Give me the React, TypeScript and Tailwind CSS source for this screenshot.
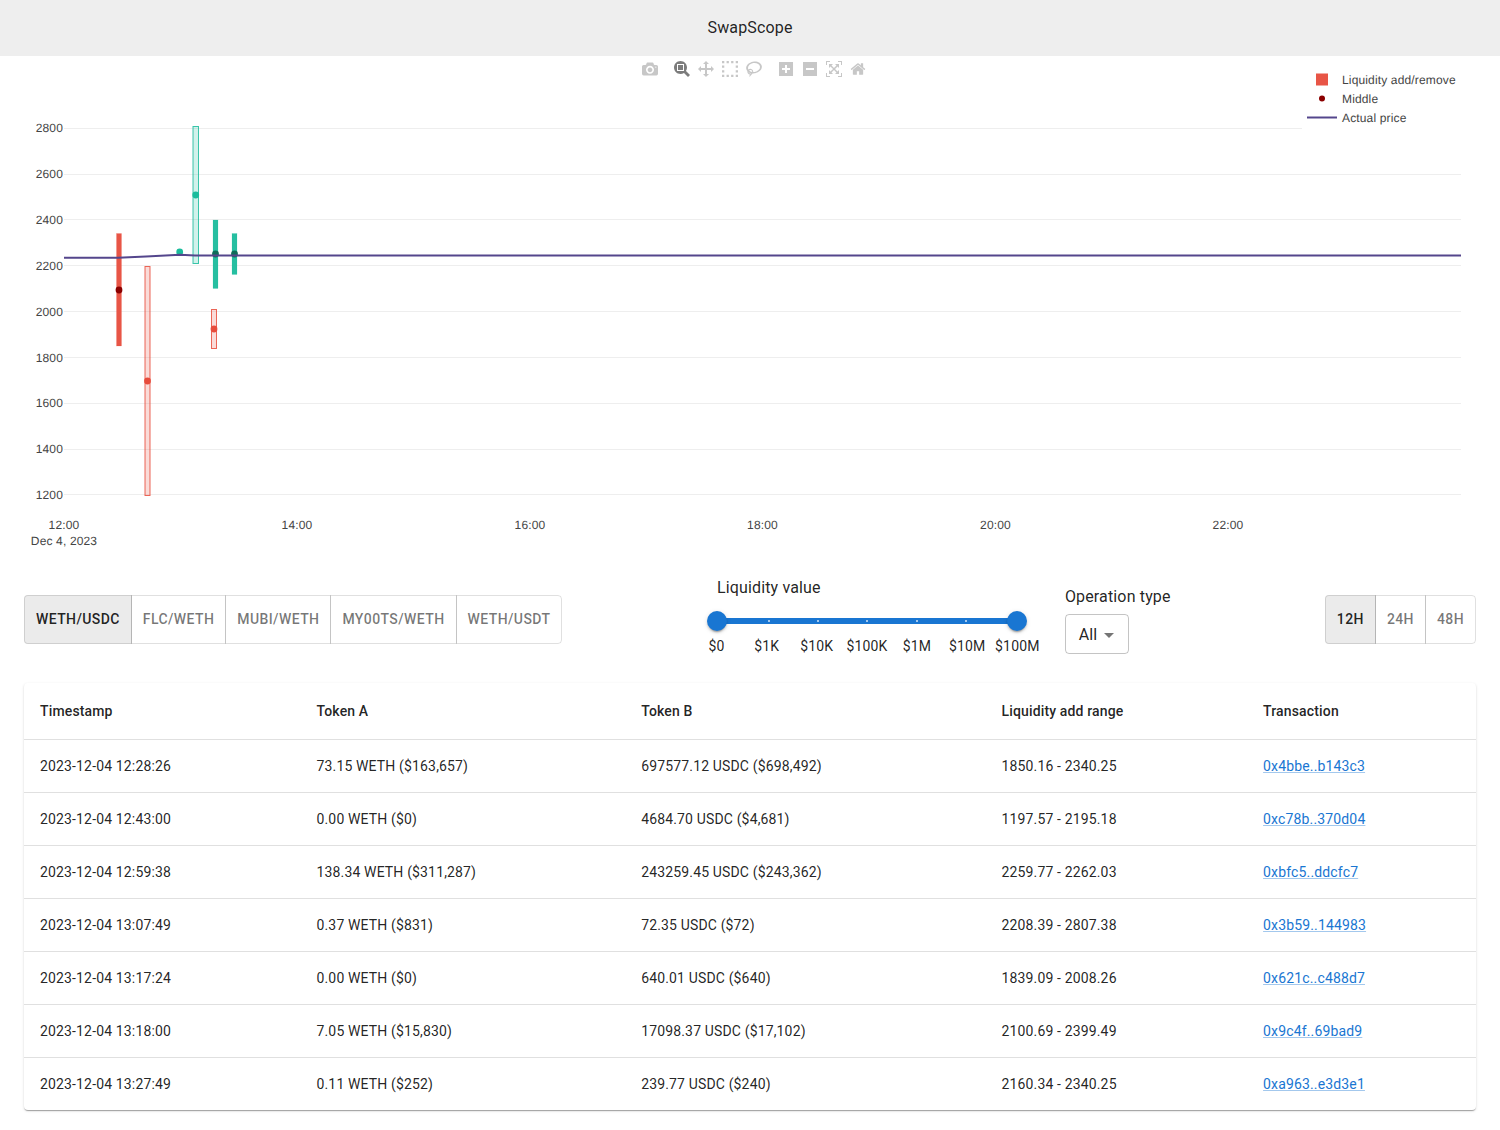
import { useState } from "react";

const PAIRS = ["WETH/USDC", "FLC/WETH", "MUBI/WETH", "MY00TS/WETH", "WETH/USDT"];
const RANGES = ["12H", "24H", "48H"];
const MARKS = ["$0", "$1K", "$10K", "$100K", "$1M", "$10M", "$100M"];

const ROWS = [
  ["2023-12-04 12:28:26", "73.15 WETH ($163,657)", "697577.12 USDC ($698,492)", "1850.16 - 2340.25", "0x4bbe..b143c3"],
  ["2023-12-04 12:43:00", "0.00 WETH ($0)", "4684.70 USDC ($4,681)", "1197.57 - 2195.18", "0xc78b..370d04"],
  ["2023-12-04 12:59:38", "138.34 WETH ($311,287)", "243259.45 USDC ($243,362)", "2259.77 - 2262.03", "0xbfc5..ddcfc7"],
  ["2023-12-04 13:07:49", "0.37 WETH ($831)", "72.35 USDC ($72)", "2208.39 - 2807.38", "0x3b59..144983"],
  ["2023-12-04 13:17:24", "0.00 WETH ($0)", "640.01 USDC ($640)", "1839.09 - 2008.26", "0x621c..c488d7"],
  ["2023-12-04 13:18:00", "7.05 WETH ($15,830)", "17098.37 USDC ($17,102)", "2100.69 - 2399.49", "0x9c4f..69bad9"],
  ["2023-12-04 13:27:49", "0.11 WETH ($252)", "239.77 USDC ($240)", "2160.34 - 2340.25", "0xa963..e3d3e1"],
];

// plotly modebar glyphs
const ICONS: { w: number; d: string; active?: boolean; gap?: boolean }[] = [
  {
    w: 1000,
    d: "m500 450c-83 0-150-67-150-150 0-83 67-150 150-150 83 0 150 67 150 150 0 83-67 150-150 150z m400 150h-120c-16 0-34 13-39 29l-31 93c-6 15-23 28-40 28h-340c-16 0-34-13-39-28l-31-94c-6-15-23-28-40-28h-120c-55 0-100-45-100-100v-450c0-55 45-100 100-100h800c55 0 100 45 100 100v450c0 55-45 100-100 100z m-400-550c-138 0-250 112-250 250 0 138 112 250 250 250 138 0 250-112 250-250 0-138-112-250-250-250z m365 380c-19 0-35 16-35 35 0 19 16 35 35 35 19 0 35-16 35-35 0-19-16-35-35-35z",
  },
  {
    w: 1000,
    gap: true,
    active: true,
    d: "m1000-25l-250 251c40 63 63 138 63 218 0 224-182 406-407 406-224 0-406-182-406-406s183-406 407-406c80 0 155 22 218 62l250-250 125 125z m-812 250l0 438 437 0 0-438-437 0z m62 375l313 0 0-312-313 0 0 312z",
  },
  {
    w: 1000,
    d: "m1000 350l-187 188 0-125-250 0 0 250 125 0-188 187-187-187 125 0 0-250-250 0 0 125-188-188 186-187 0 125 252 0 0-250-125 0 187-188 188 188-125 0 0 250 250 0 0-126 187 188z",
  },
  {
    w: 1000,
    d: "m0 850l0-143 143 0 0 143-143 0z m286 0l0-143 143 0 0 143-143 0z m285 0l0-143 143 0 0 143-143 0z m286 0l0-143 143 0 0 143-143 0z m-857-286l0-143 143 0 0 143-143 0z m857 0l0-143 143 0 0 143-143 0z m-857-285l0-143 143 0 0 143-143 0z m857 0l0-143 143 0 0 143-143 0z m-857-286l0-143 143 0 0 143-143 0z m286 0l0-143 143 0 0 143-143 0z m285 0l0-143 143 0 0 143-143 0z m286 0l0-143 143 0 0 143-143 0z",
  },
  {
    w: 1031,
    d: "m1018 538c-36 207-290 336-568 286-277-48-473-256-436-463 10-57 36-108 76-151-13-66 11-137 68-183 34-28 75-41 114-42l-55-70 0 0c-2-1-3-2-4-3-10-14-8-34 5-45 14-11 34-8 45 4 1 1 2 3 2 5l0 0 113 140c16 11 31 24 45 40 4 3 6 7 8 11 48-3 100 0 151 9 278 48 473 255 436 462z m-624-379c-80 14-149 48-197 96 42 42 109 47 156 9 33-26 47-66 41-105z m-187-74c-19 16-33 37-39 60 50-32 109-55 174-68-42-25-95-24-135 8z m360 75c-34-7-69-9-102-8 8 62-16 128-68 170-73 59-175 54-244-5-9 20-16 40-20 61-28 159 121 317 333 354s407-60 434-217c28-159-121-318-333-355z",
  },
  {
    w: 875,
    gap: true,
    d: "m1 787l0-875 875 0 0 875-875 0z m687-500l-187 0 0-187-125 0 0 187-188 0 0 125 188 0 0 187 125 0 0-187 187 0 0-125z",
  },
  { w: 875, d: "m0 788l0-876 875 0 0 876-875 0z m688-500l-500 0 0 125 500 0 0-125z" },
  {
    w: 1000,
    d: "m250 850l-187 0-63 0 0-62 0-188 63 0 0 188 187 0 0 62z m688 0l-188 0 0-62 188 0 0-188 62 0 0 188 0 62-62 0z m-875-938l0 188-63 0 0-188 0-62 63 0 187 0 0 62-187 0z m875 188l0-188-188 0 0-62 188 0 62 0 0 62 0 188-62 0z m-125 188l-1 0-93-94-156 156 156 156 92-93 2 0 0 250-250 0 0-2 93-92-156-156-156 156 94 92 0 2-250 0 0-250 0 0 93 93 157-156-157-156-93 94 0 0 0-250 250 0 0 0-94 93 156 157 156-157-93-93 0 0 250 0 0 250z",
  },
  {
    w: 928.6,
    d: "m786 296v-267q0-15-11-26t-25-10h-214v214h-143v-214h-214q-15 0-25 10t-11 26v267q0 1 0 2t0 2l321 264 321-264q1-1 1-4z m124 39l-34-41q-5-5-12-6h-2q-7 0-12 3l-386 322-386-322q-7-4-13-4-7 2-12 7l-35 41q-4 5-3 13t6 12l401 334q18 15 42 15t43-15l136-114v109q0 8 5 13t13 5h107q8 0 13-5t5-13v-227l122-102q5-5 6-12t-4-13z",
  },
];

const Y_TICKS = [
  ["2800", 128.5, 132],
  ["2600", 174.5, 178],
  ["2400", 219.5, 224],
  ["2200", 265.5, 270],
  ["2000", 311.5, 316],
  ["1800", 357.5, 362],
  ["1600", 403.5, 407],
  ["1400", 449.5, 453],
  ["1200", 494.5, 499],
] as const;
const X_TICKS = [
  ["12:00", 64],
  ["14:00", 297],
  ["16:00", 530],
  ["18:00", 762.5],
  ["20:00", 995.5],
  ["22:00", 1228],
] as const;

const RED = "#e74c3c";
const TEAL = "#1abc9c";

function Modebar() {
  return (
    <div className="absolute top-[2px] left-[638px] flex">
      {ICONS.map((icon, i) => (
        <div key={i} className={`px-1 py-[3px] ${icon.gap ? "ml-2" : ""}`}>
          <svg
            viewBox={`0 0 ${icon.w} 1000`}
            className={`block h-4 w-4 ${icon.active ? "fill-[#444444b3]" : "fill-[#4444444d]"}`}
          >
            <path d={icon.d} transform="matrix(1 0 0 -1 0 850)" />
          </svg>
        </div>
      ))}
    </div>
  );
}

function Range(props: { x: number; y: number; w: number; h: number; color: string; solid?: boolean; cy: number; dot: string }) {
  const { x, y, w, h, color, solid, cy, dot } = props;
  return (
    <g>
      <rect
        x={x}
        y={y}
        width={w}
        height={h}
        fill={color}
        fillOpacity={solid ? 0.95 : 0.2}
        stroke={color}
        strokeOpacity={solid ? 0.3 : 0.85}
        strokeWidth={solid ? 0.5 : 1}
      />
      <circle cx={x + w / 2} cy={cy} r={3.4} fill={dot} />
    </g>
  );
}

function Chart() {
  return (
    <div className="relative h-[500px]">
      <svg
        viewBox="0 56 1500 500"
        className="block h-[500px] w-[1500px] font-['Liberation_Sans',sans-serif] text-[12px] tracking-[0.15px] [text-rendering:geometricPrecision]"
      >
        {Y_TICKS.map(([label, y, base]) => (
          <g key={label}>
            <line x1={64} x2={1461} y1={y} y2={y} stroke="#eeeeee" strokeWidth={1} />
            <text x={63} y={base} textAnchor="end" fill="#444">
              {label}
            </text>
          </g>
        ))}
        {X_TICKS.map(([label, x]) => (
          <text key={label} x={x} y={529} textAnchor="middle" fill="#444">
            {label}
          </text>
        ))}
        <text x={64} y={545} textAnchor="middle" fill="#444">
          Dec 4, 2023
        </text>

        <Range x={116.5} y={233.5} w={5} h={112.5} color={RED} solid cy={290} dot="#8b0000" />
        <Range x={145} y={266.5} w={5} h={229} color={RED} cy={381} dot={RED} />
        <circle cx={179.7} cy={252} r={3.4} fill={TEAL} />
        <Range x={193} y={126.5} w={5.5} h={137} color={TEAL} cy={195} dot={TEAL} />
        <Range x={213} y={220} w={5} h={68.5} color={TEAL} solid cy={254} dot="#0e6b58" />
        <Range x={232} y={233.5} w={5} h={41} color={TEAL} solid cy={254} dot="#0e6b58" />
        <Range x={211.5} y={309.5} w={5} h={39} color={RED} cy={329} dot={RED} />

        <polyline
          points="64,257.8 118,257.8 146,256.6 180,254.8 195,255.4 1461,255.4"
          fill="none"
          stroke="#54468c"
          strokeWidth={2}
        />

        <rect x={1302} y={66} width={180} height={66} fill="#fff" />
        <rect x={1316} y={73.5} width={12} height={12} fill={RED} fillOpacity={0.95} />
        <circle cx={1322} cy={98.5} r={3} fill="#8b0000" />
        <line x1={1307} x2={1337} y1={117.5} y2={117.5} stroke="#54468c" strokeWidth={2} />
        <text x={1342} y={84} fill="#444">
          Liquidity add/remove
        </text>
        <text x={1342} y={103} fill="#444">
          Middle
        </text>
        <text x={1342} y={122} fill="#444">
          Actual price
        </text>
      </svg>
      <Modebar />
    </div>
  );
}

function ToggleGroup({ items, value, onChange }: { items: string[]; value: string; onChange: (v: string) => void }) {
  return (
    <div className="flex">
      {items.map((item, i) => (
        <button
          key={item}
          onClick={() => onChange(item)}
          className={`border border-[#0000001f] p-[11px] text-sm leading-[24.5px] font-medium tracking-[0.4px] first:rounded-l last:rounded-r ${
            i > 0 ? "-ml-px" : ""
          } ${item === value ? "bg-[#00000014] text-[#000000de]" : "text-[#0000008a]"}`}
        >
          {item}
        </button>
      ))}
    </div>
  );
}

function LiquiditySlider() {
  return (
    <div className="w-[350px]">
      <div className="pt-px pl-[24.5px] text-base leading-6 tracking-[0.15px] text-[#000000de]">Liquidity value</div>
      <div className="relative mx-[25px] mt-[18px] h-1.5 rounded-full bg-[#1976d2]">
        <div className="flex h-full items-center justify-between px-px">
          {MARKS.map((mark) => (
            <span key={mark} className="h-0.5 w-0.5 rounded-full bg-[#ffffffcc]" />
          ))}
        </div>
        <span className="absolute top-[-7px] left-[-10px] h-5 w-5 rounded-full bg-[#1976d2] shadow-[0_3px_1px_-2px_rgba(0,0,0,0.2),0_2px_2px_0_rgba(0,0,0,0.14),0_1px_5px_0_rgba(0,0,0,0.12)]" />
        <span className="absolute top-[-7px] right-[-10px] h-5 w-5 rounded-full bg-[#1976d2] shadow-[0_3px_1px_-2px_rgba(0,0,0,0.2),0_2px_2px_0_rgba(0,0,0,0.14),0_1px_5px_0_rgba(0,0,0,0.12)]" />
      </div>
      <div className="mt-[12px] -ml-px grid grid-cols-7 text-center text-sm leading-5 tracking-[0.15px] whitespace-nowrap text-[#000000de]">
        {MARKS.map((mark) => (
          <span key={mark}>{mark}</span>
        ))}
      </div>
    </div>
  );
}

function OperationType() {
  return (
    <div className="ml-[23px] pt-[10px]">
      <div className="-ml-[0.5px] text-base leading-6 tracking-[0.15px] text-[#000000de]">Operation type</div>
      <div className="mt-[5px] flex h-10 w-16 items-center rounded border border-[#0000003b] pt-px pl-[13px] text-base tracking-[0.15px] text-[#000000de]">
        <span className="-ml-[0.75px]">All</span>
        <svg viewBox="0 0 24 24" className="h-6 w-6 fill-[#0000008a]">
          <path d="M7 10l5 5 5-5z" />
        </svg>
      </div>
    </div>
  );
}

export default function App() {
  const [pair, setPair] = useState("WETH/USDC");
  const [range, setRange] = useState("12H");

  return (
    <div className="min-h-[1130px] bg-white font-['Roboto',sans-serif]">
      <header className="flex h-14 items-center justify-center bg-[#eeeeee] text-base tracking-[0.15px] text-[#000000de]">
        SwapScope
      </header>
      <Chart />
      <div className="flex items-start px-6 pt-[19px]">
        <div className="pt-[20px]">
          <ToggleGroup items={PAIRS} value={pair} onChange={setPair} />
        </div>
        <div className="ml-[130px]">
          <LiquiditySlider />
        </div>
        <OperationType />
        <div className="ml-auto pt-[20px]">
          <ToggleGroup items={RANGES} value={range} onChange={setRange} />
        </div>
      </div>

      <div className="mx-6 mt-[27px] overflow-hidden rounded bg-white shadow-[0_2px_1px_-1px_rgba(0,0,0,0.2),0_1px_1px_0_rgba(0,0,0,0.14),0_1px_3px_0_rgba(0,0,0,0.12)]">
        <table className="w-full table-fixed border-collapse text-sm tracking-[0.15px] text-[#000000de]">
          <colgroup>
            <col className="w-[276.5px]" />
            <col className="w-[324.7px]" />
            <col className="w-[360.3px]" />
            <col className="w-[261.6px]" />
            <col />
          </colgroup>
          <thead>
            <tr className="h-[56px] border-b border-[#e0e0e0] text-left">
              <th className="px-4 font-medium">Timestamp</th>
              <th className="px-4 font-medium">Token A</th>
              <th className="px-4 font-medium">Token B</th>
              <th className="px-4 font-medium">Liquidity add range</th>
              <th className="px-4 font-medium">Transaction</th>
            </tr>
          </thead>
          <tbody>
            {ROWS.map((row) => (
              <tr key={row[0]} className="h-[53px] border-b border-[#e0e0e0] last:border-b-0">
                <td className="px-4">{row[0]}</td>
                <td className="px-4">{row[1]}</td>
                <td className="px-4">{row[2]}</td>
                <td className="px-4">{row[3]}</td>
                <td className="px-4">
                  <a href="#" className="text-[#1976d2] underline decoration-[#1976d266]">
                    {row[4]}
                  </a>
                </td>
              </tr>
            ))}
          </tbody>
        </table>
      </div>
    </div>
  );
}
